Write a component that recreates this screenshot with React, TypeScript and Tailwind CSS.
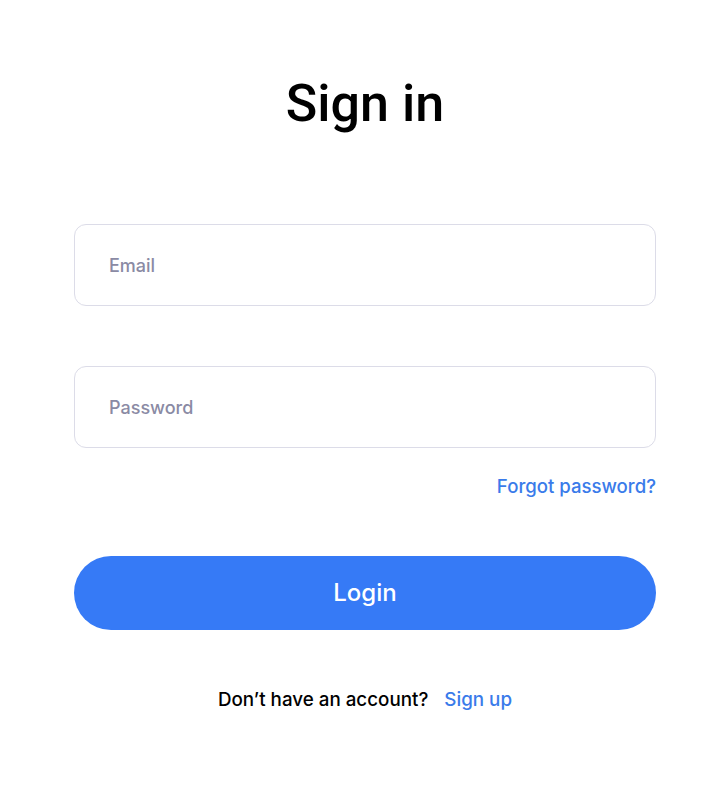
export default function App() {
  return (
    <div className="min-h-screen bg-white font-['Inter',sans-serif]">
      <div className="ml-[74px] flex w-[582px] flex-col pt-[74px]">
        <h1 className="text-center font-['Roboto',sans-serif] text-[52px] leading-[60px] font-medium text-black">
          Sign in
        </h1>

        <input
          type="email"
          placeholder="Email"
          className="mt-[90px] h-[82px] w-full rounded-[12px] border border-[#dcdce8] px-[34px] text-[18px] font-medium text-black outline-none placeholder:text-[#8a8aa4]"
        />
        <input
          type="password"
          placeholder="Password"
          className="mt-[60px] h-[82px] w-full rounded-[12px] border border-[#dcdce8] px-[34px] text-[18px] font-medium text-black outline-none placeholder:text-[#8a8aa4]"
        />

        <div className="mt-[26px] flex justify-end">
          <a href="#" className="text-[18.6px] leading-[24px] font-medium text-[#3a7bea]">
            Forgot password?
          </a>
        </div>

        <button className="mt-[58px] h-[74px] w-full rounded-full bg-[#367af6] text-[24px] font-medium text-white">
          Login
        </button>

        <div className="mt-[58px] flex items-center justify-center gap-4 text-[18.8px] leading-[24px] font-medium">
          <span className="text-black">Don’t have an account?</span>
          <a href="#" className="text-[#3a7bea]">Sign up</a>
        </div>
      </div>
    </div>
  );
}
